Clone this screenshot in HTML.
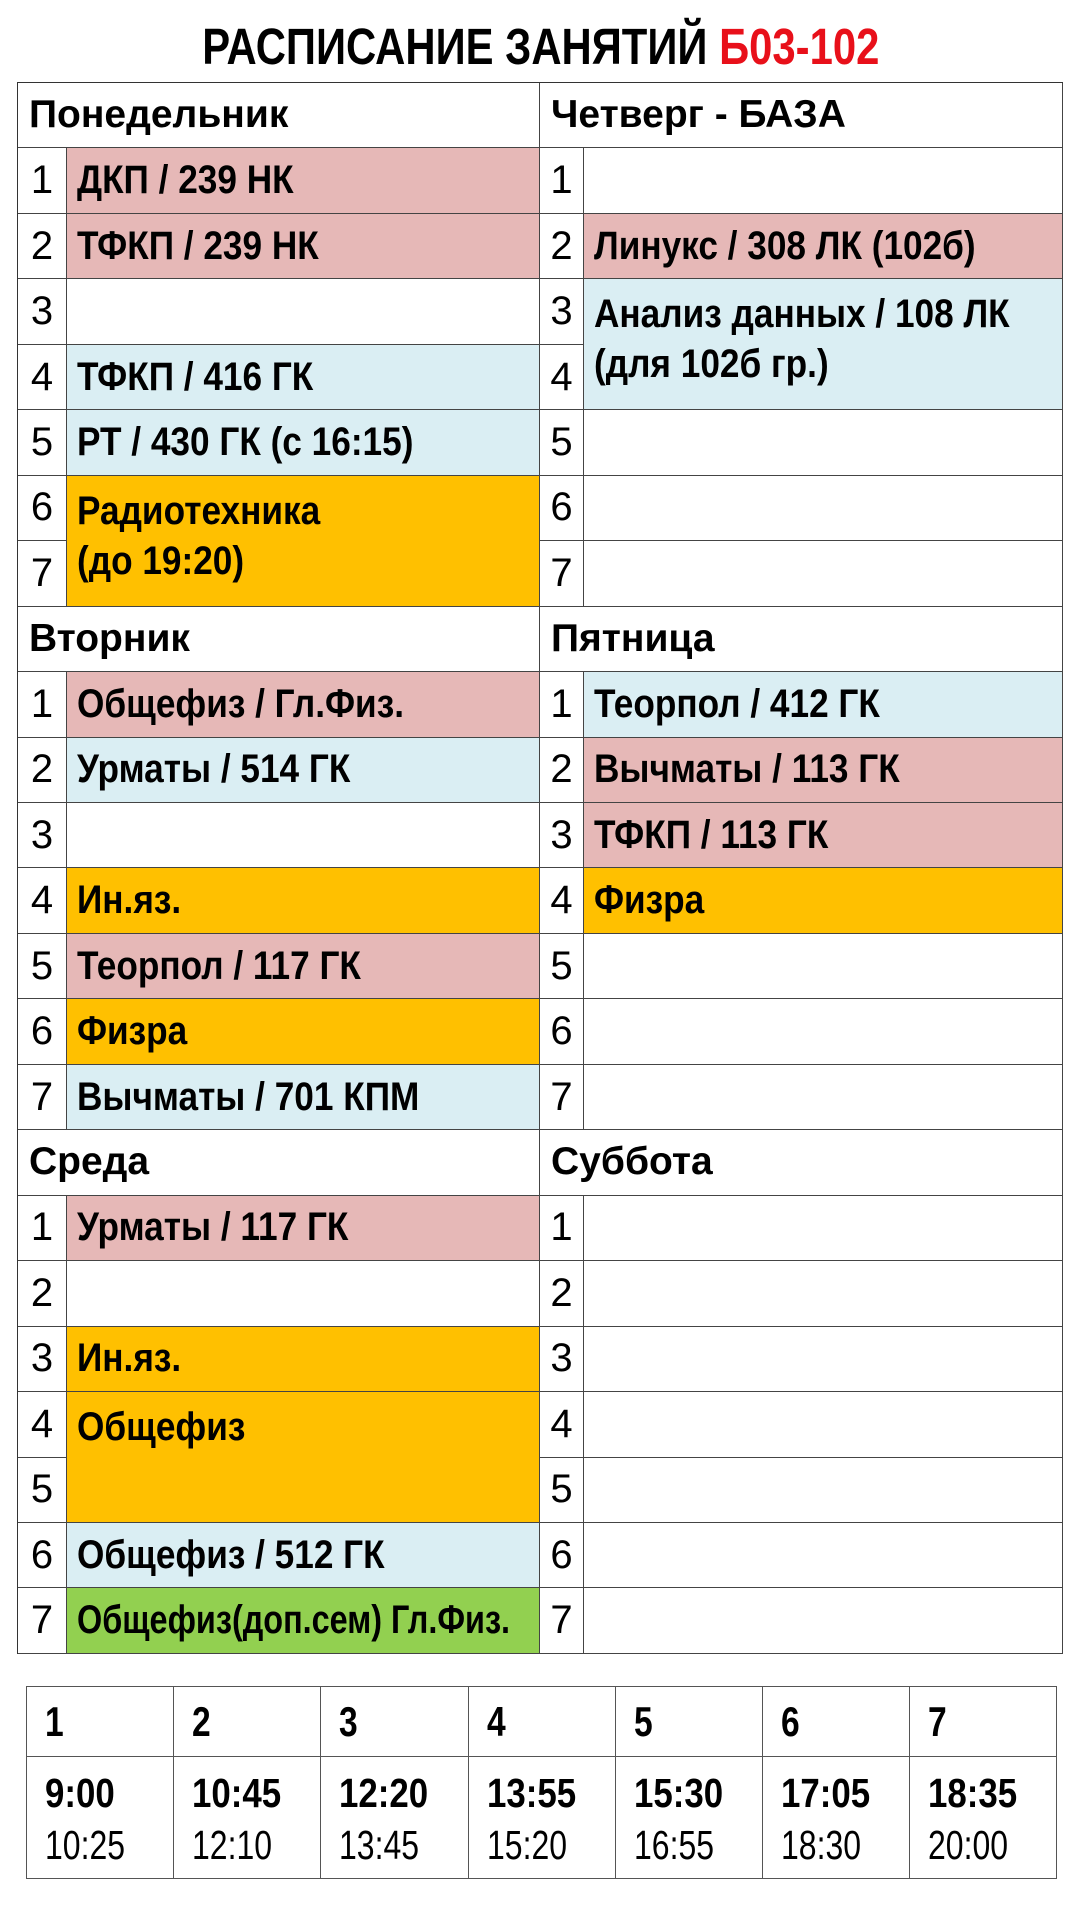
<!DOCTYPE html>
<html><head><meta charset="utf-8"><style>
*{box-sizing:border-box;margin:0;padding:0}
body{width:1081px;height:1920px;background:#fff;position:relative;overflow:hidden;font-family:"Liberation Sans",sans-serif;color:#000}
.title{position:absolute;left:0;width:1081px;top:21px;text-align:center;font-weight:bold;font-size:51px;line-height:52px}
.title span.in{display:inline-block;transform:scaleX(.82);transform-origin:center;white-space:nowrap}
.red{color:#e8101a}
.grid{position:absolute;left:17px;top:82px;width:1046px;display:grid;grid-template-columns:49px 473px 44px 479px;grid-template-rows:repeat(24,65.46px);border-top:1.5px solid #333;border-left:1.5px solid #333}
.grid>div{border-right:1.5px solid #444;border-bottom:1.5px solid #444;overflow:visible;white-space:nowrap}
.h{grid-column:span 2;font-weight:bold;font-size:39px;padding-left:11px;display:flex;align-items:center}
.n{font-size:40px;display:flex;align-items:center;justify-content:center}
.c{font-weight:bold;font-size:40px;display:flex;align-items:center;padding-left:10px}
.c span{display:inline-block;transform:scaleX(.88);transform-origin:left center}
.m{align-items:flex-start;padding-top:10px;line-height:50px}
.m span{transform-origin:left top}
.p{background:#e6b8b7}.b{background:#daeef3}.o{background:#ffc000}.g{background:#92d050}
.bt{position:absolute;left:26px;top:1686px;width:1031px;display:grid;grid-template-columns:repeat(7,147.2px);grid-template-rows:70px 122px;border-top:1.5px solid #555;border-left:1.5px solid #555}
.bt>div{border-right:1.5px solid #555;border-bottom:1.5px solid #555;padding-left:18px}
.bt .hn{font-weight:bold;font-size:42px;display:flex;align-items:center}
.bt .hn span{display:inline-block;transform:scaleX(.8);transform-origin:left center}
.bt .t{font-size:41px;line-height:52px;padding-top:10px}
.bt .t span{display:inline-block;transform:scaleX(.78);transform-origin:left center}
.bt .t b{display:inline-block;transform:scaleX(.85);transform-origin:left center}
</style></head><body>
<div class="title"><span class="in">РАСПИСАНИЕ ЗАНЯТИЙ <span class="red">Б03-102</span></span></div>
<div class="grid">
<div class="h" style="grid-row:1;grid-column:1/3">Понедельник</div>
<div class="h" style="grid-row:1;grid-column:3/5">Четверг - БАЗА</div>
<div class="n" style="grid-row:2;grid-column:1">1</div><div class="c p" style="grid-row:2;grid-column:2"><span>ДКП / 239 НК</span></div>
<div class="n" style="grid-row:3;grid-column:1">2</div><div class="c p" style="grid-row:3;grid-column:2"><span>ТФКП / 239 НК</span></div>
<div class="n" style="grid-row:4;grid-column:1">3</div><div class="c" style="grid-row:4;grid-column:2"></div>
<div class="n" style="grid-row:5;grid-column:1">4</div><div class="c b" style="grid-row:5;grid-column:2"><span>ТФКП / 416 ГК</span></div>
<div class="n" style="grid-row:6;grid-column:1">5</div><div class="c b" style="grid-row:6;grid-column:2"><span>РТ / 430 ГК (с 16:15)</span></div>
<div class="n" style="grid-row:7;grid-column:1">6</div><div class="n" style="grid-row:8;grid-column:1">7</div>
<div class="c o m" style="grid-row:7/9;grid-column:2"><span>Радиотехника<br>(до 19:20)</span></div>
<div class="n" style="grid-row:2;grid-column:3">1</div><div class="c" style="grid-row:2;grid-column:4"></div>
<div class="n" style="grid-row:3;grid-column:3">2</div><div class="c p" style="grid-row:3;grid-column:4"><span>Линукс / 308 ЛК (102б)</span></div>
<div class="n" style="grid-row:4;grid-column:3">3</div><div class="n" style="grid-row:5;grid-column:3">4</div>
<div class="c b m" style="grid-row:4/6;grid-column:4"><span>Анализ данных / 108 ЛК<br>(для 102б гр.)</span></div>
<div class="n" style="grid-row:6;grid-column:3">5</div><div class="c" style="grid-row:6;grid-column:4"></div>
<div class="n" style="grid-row:7;grid-column:3">6</div><div class="c" style="grid-row:7;grid-column:4"></div>
<div class="n" style="grid-row:8;grid-column:3">7</div><div class="c" style="grid-row:8;grid-column:4"></div>

<div class="h" style="grid-row:9;grid-column:1/3">Вторник</div>
<div class="h" style="grid-row:9;grid-column:3/5">Пятница</div>
<div class="n" style="grid-row:10;grid-column:1">1</div><div class="c p" style="grid-row:10;grid-column:2"><span>Общефиз / Гл.Физ.</span></div>
<div class="n" style="grid-row:11;grid-column:1">2</div><div class="c b" style="grid-row:11;grid-column:2"><span>Урматы / 514 ГК</span></div>
<div class="n" style="grid-row:12;grid-column:1">3</div><div class="c" style="grid-row:12;grid-column:2"></div>
<div class="n" style="grid-row:13;grid-column:1">4</div><div class="c o" style="grid-row:13;grid-column:2"><span>Ин.яз.</span></div>
<div class="n" style="grid-row:14;grid-column:1">5</div><div class="c p" style="grid-row:14;grid-column:2"><span>Теорпол / 117 ГК</span></div>
<div class="n" style="grid-row:15;grid-column:1">6</div><div class="c o" style="grid-row:15;grid-column:2"><span>Физра</span></div>
<div class="n" style="grid-row:16;grid-column:1">7</div><div class="c b" style="grid-row:16;grid-column:2"><span>Вычматы / 701 КПМ</span></div>
<div class="n" style="grid-row:10;grid-column:3">1</div><div class="c b" style="grid-row:10;grid-column:4"><span>Теорпол / 412 ГК</span></div>
<div class="n" style="grid-row:11;grid-column:3">2</div><div class="c p" style="grid-row:11;grid-column:4"><span>Вычматы / 113 ГК</span></div>
<div class="n" style="grid-row:12;grid-column:3">3</div><div class="c p" style="grid-row:12;grid-column:4"><span>ТФКП / 113 ГК</span></div>
<div class="n" style="grid-row:13;grid-column:3">4</div><div class="c o" style="grid-row:13;grid-column:4"><span>Физра</span></div>
<div class="n" style="grid-row:14;grid-column:3">5</div><div class="c" style="grid-row:14;grid-column:4"></div>
<div class="n" style="grid-row:15;grid-column:3">6</div><div class="c" style="grid-row:15;grid-column:4"></div>
<div class="n" style="grid-row:16;grid-column:3">7</div><div class="c" style="grid-row:16;grid-column:4"></div>

<div class="h" style="grid-row:17;grid-column:1/3">Среда</div>
<div class="h" style="grid-row:17;grid-column:3/5">Суббота</div>
<div class="n" style="grid-row:18;grid-column:1">1</div><div class="c p" style="grid-row:18;grid-column:2"><span>Урматы / 117 ГК</span></div>
<div class="n" style="grid-row:19;grid-column:1">2</div><div class="c" style="grid-row:19;grid-column:2"></div>
<div class="n" style="grid-row:20;grid-column:1">3</div><div class="c o" style="grid-row:20;grid-column:2"><span>Ин.яз.</span></div>
<div class="n" style="grid-row:21;grid-column:1">4</div><div class="n" style="grid-row:22;grid-column:1">5</div>
<div class="c o m" style="grid-row:21/23;grid-column:2"><span>Общефиз</span></div>
<div class="n" style="grid-row:23;grid-column:1">6</div><div class="c b" style="grid-row:23;grid-column:2"><span>Общефиз / 512 ГК</span></div>
<div class="n" style="grid-row:24;grid-column:1">7</div><div class="c g" style="grid-row:24;grid-column:2"><span style="transform:scaleX(.81)">Общефиз(доп.сем) Гл.Физ.</span></div>
<div class="n" style="grid-row:18;grid-column:3">1</div><div class="c" style="grid-row:18;grid-column:4"></div>
<div class="n" style="grid-row:19;grid-column:3">2</div><div class="c" style="grid-row:19;grid-column:4"></div>
<div class="n" style="grid-row:20;grid-column:3">3</div><div class="c" style="grid-row:20;grid-column:4"></div>
<div class="n" style="grid-row:21;grid-column:3">4</div><div class="c" style="grid-row:21;grid-column:4"></div>
<div class="n" style="grid-row:22;grid-column:3">5</div><div class="c" style="grid-row:22;grid-column:4"></div>
<div class="n" style="grid-row:23;grid-column:3">6</div><div class="c" style="grid-row:23;grid-column:4"></div>
<div class="n" style="grid-row:24;grid-column:3">7</div><div class="c" style="grid-row:24;grid-column:4"></div>
</div>

<div class="bt">
<div class="hn"><span>1</span></div><div class="hn"><span>2</span></div><div class="hn"><span>3</span></div><div class="hn"><span>4</span></div><div class="hn"><span>5</span></div><div class="hn"><span>6</span></div><div class="hn"><span>7</span></div>
<div class="t"><b>9:00</b><br><span>10:25</span></div>
<div class="t"><b>10:45</b><br><span>12:10</span></div>
<div class="t"><b>12:20</b><br><span>13:45</span></div>
<div class="t"><b>13:55</b><br><span>15:20</span></div>
<div class="t"><b>15:30</b><br><span>16:55</span></div>
<div class="t"><b>17:05</b><br><span>18:30</span></div>
<div class="t"><b>18:35</b><br><span>20:00</span></div>
</div>
</body></html>
